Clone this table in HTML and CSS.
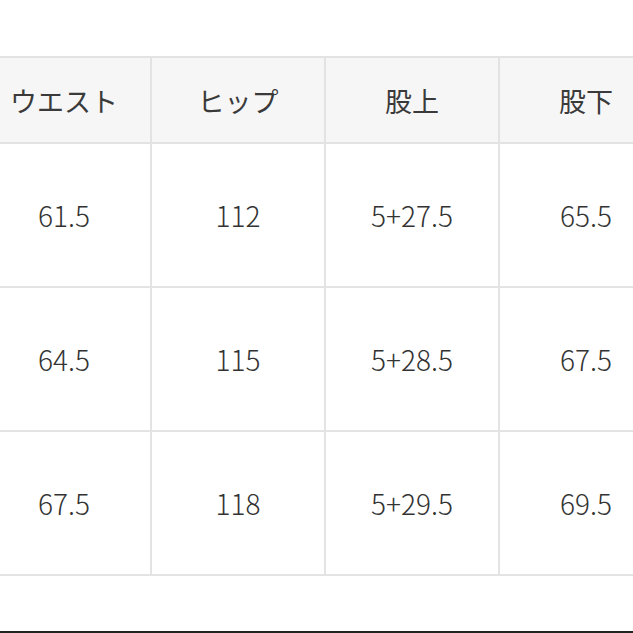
FILE: index.html
```html
<!DOCTYPE html>
<html lang="ja">
<head>
<meta charset="utf-8">
<link rel="stylesheet" href="styles.css">
</head>
<body>
<div class="page">
  <div class="grid">
    <div class="cell head">ウエスト</div>
    <div class="cell head">ヒップ</div>
    <div class="cell head">股上</div>
    <div class="cell head">股下</div>
    <div class="cell">61.5</div>
    <div class="cell">112</div>
    <div class="cell">5+27.5</div>
    <div class="cell">65.5</div>
    <div class="cell">64.5</div>
    <div class="cell">115</div>
    <div class="cell">5+28.5</div>
    <div class="cell">67.5</div>
    <div class="cell">67.5</div>
    <div class="cell">118</div>
    <div class="cell">5+29.5</div>
    <div class="cell">69.5</div>
  </div>
  <div class="bottom-line"></div>
</div>
</body>
</html>
```

FILE: styles.css
```css
html, body {
  margin: 0;
  padding: 0;
  background: #ffffff;
}
body {
  width: 633px;
  height: 633px;
  overflow: hidden;
  font-family: "Noto Sans CJK JP", "Noto Sans", sans-serif;
  color: #333333;
}
.page {
  padding-top: 56px;
  width: 633px;
  height: 577px;
  overflow: hidden;
}
.grid {
  display: grid;
  grid-template-columns: repeat(4, 172px);
  grid-template-rows: 84px repeat(3, 142px);
  gap: 2px;
  padding: 2px 0;
  margin-left: -22px;
  width: 694px;
  background: #e3e3e3;
}
.cell {
  background: #ffffff;
  display: flex;
  align-items: center;
  justify-content: center;
  font-size: 28px;
  font-weight: 300;
  line-height: 1;
}
.cell.head {
  background: #f6f6f6;
  color: #3a3a3a;
  font-weight: 400;
  font-size: 27px;
}
.bottom-line {
  margin-top: 55px;
  height: 2px;
  background: #222222;
}
```
